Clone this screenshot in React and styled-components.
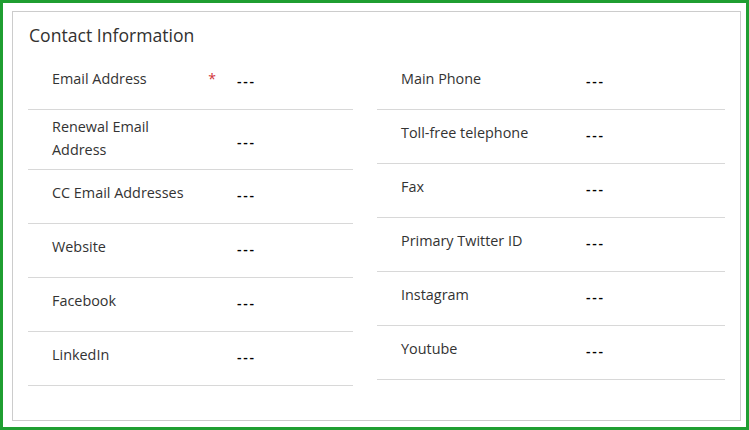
import React from 'react';
import styled, { createGlobalStyle } from 'styled-components';

const GlobalStyle = createGlobalStyle`
    html, body {
        margin: 0;
        padding: 0;
        background: #ffffff;
    }

    body {
        font-family: 'Open Sans', 'Liberation Sans', sans-serif;
    }
`;

const Frame = styled.div`
    box-sizing: border-box;
    display: flex;
    width: 749px;
    height: 430px;
    border: 3px solid #1f9e31;
    padding: 8px 5px 6px 9px;
`;

const Section = styled.section`
    box-sizing: border-box;
    flex: 1 1 auto;
    border: 1px solid #cccccc;
    padding: 11px 14px 0 15px;
`;

const Title = styled.h2`
    margin: 0 0 9px 1px;
    font-size: 17.6px;
    font-weight: 400;
    line-height: 24px;
    color: #323130;
`;

const Columns = styled.div`
    display: grid;
    grid-template-columns: 325px 348px;
    column-gap: 24px;
    align-items: start;
`;

const Column = styled.div`
    display: flex;
    flex-direction: column;
`;

const Row = styled.div`
    display: flex;
    min-height: 53px;
    border-bottom: 1px solid #d8d8d8;
`;

const LabelCell = styled.div`
    box-sizing: border-box;
    display: flex;
    flex: 0 0 209px;
    justify-content: space-between;
    align-items: flex-start;
    padding: ${props => props.$wrap ? '5px 21px 8px 24px' : '11px 21px 8px 24px'};
`;

const LabelText = styled.label`
    max-width: 145px;
    font-size: 14.4px;
    line-height: 23px;
    color: #333333;
`;

const Required = styled.span`
    font-size: 14px;
    line-height: 23px;
    color: #d13438;
`;

const Value = styled.div`
    align-self: center;
    margin: ${props => props.$wrap ? '4px 0 0' : '0 0 4px'};
    font-size: 14px;
    font-weight: 600;
    letter-spacing: 1.8px;
    line-height: 20px;
    color: #000000;
`;

const leftFields = [
    { label: 'Email Address', required: true },
    { label: 'Renewal Email Address', wrap: true },
    { label: 'CC Email Addresses' },
    { label: 'Website' },
    { label: 'Facebook' },
    { label: 'LinkedIn' }
];

const rightFields = [
    { label: 'Main Phone' },
    { label: 'Toll-free telephone' },
    { label: 'Fax' },
    { label: 'Primary Twitter ID' },
    { label: 'Instagram' },
    { label: 'Youtube' }
];

function Field({ label, required, wrap }) {
    return <Row>
        <LabelCell $wrap={wrap}>
            <LabelText>{label}</LabelText>
            {required ? <Required>*</Required> : null}
        </LabelCell>
        <Value $wrap={wrap}>---</Value>
    </Row>;
}

export default function App() {
    return <>
        <GlobalStyle />
        <Frame>
            <Section>
                <Title>Contact Information</Title>
                <Columns>
                    <Column>
                        {leftFields.map((field, index) => <Field key={index} {...field} />)}
                    </Column>
                    <Column>
                        {rightFields.map((field, index) => <Field key={index} {...field} />)}
                    </Column>
                </Columns>
            </Section>
        </Frame>
    </>;
}
